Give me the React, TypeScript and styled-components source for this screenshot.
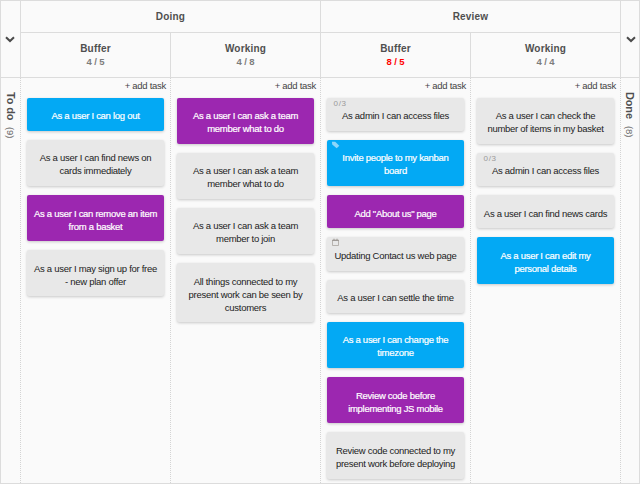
import React from "react";
import styled, { createGlobalStyle, css } from "styled-components";

const GlobalStyle = createGlobalStyle`
  * { box-sizing: border-box; }
  body { margin: 0; background: #fafafa; font-family: "Liberation Sans", Arial, sans-serif; }
`;

const line = "#dcdcdc";

const Board = styled.main`
  display: flex;
  width: 640px;
  height: 484px;
  border: 1px solid ${line};
  background: #fafafa;
  color: #4f4f4f;
  overflow: hidden;
`;

const SideLane = styled.aside`
  display: flex;
  flex-direction: column;
  flex: none;
  width: 19px;
`;

const SideHead = styled.button`
  display: flex;
  justify-content: center;
  flex: none;
  height: 77px;
  padding: 35px 1px 0 0;
  border: 0;
  border-bottom: 1px solid ${line};
  background: transparent;
  color: #4a4a4a;
`;

const SideLabel = styled.div`
  display: flex;
  align-items: center;
  gap: 7px;
  width: 100%;
  padding-top: 14px;
  writing-mode: vertical-rl;
  font-size: 11px;
  line-height: 18px;
  letter-spacing: -0.15px;
  font-weight: bold;
`;

const SideCount = styled.span`
  padding-right: 2px;
  font-size: 9.5px;
  line-height: 16px;
  letter-spacing: -0.1px;
  font-weight: normal;
  color: #6c6c6c;
`;

const Stage = styled.section`
  display: flex;
  flex-direction: column;
  width: 300px;
  flex: none;
`;

const StageTitle = styled.h2`
  flex: none;
  height: 32px;
  margin: 0;
  border: solid ${line};
  border-width: 0 0 1px 1px;
  font-size: 10px;
  line-height: 32px;
  letter-spacing: 0.2px;
  text-align: center;
`;

const Columns = styled.div`
  display: flex;
  flex: 1;
`;

const Column = styled.div`
  display: flex;
  flex-direction: column;
  width: 150px;
`;

const ColumnHead = styled.header`
  flex: none;
  height: 45px;
  padding-top: 9px;
  border: solid ${line};
  border-width: 0 0 1px 1px;
  text-align: center;
`;

const ColumnTitle = styled.h3`
  margin: 0;
  font-size: 10px;
  line-height: 14px;
  letter-spacing: 0.2px;
`;

const Limit = styled.div<{ $over?: boolean }>`
  font-size: 9.5px;
  line-height: 12px;
  letter-spacing: -0.1px;
  font-weight: bold;
  color: ${(p) => (p.$over ? "#f00" : "#7d7d7d")};
`;

const dotted = css`
  background-image: linear-gradient(to bottom, #d4d4d4 50%, transparent 50%);
  background-size: 1px 2px;
  background-repeat: repeat-y;
`;

const ColumnBody = styled.div`
  ${dotted}
  display: flex;
  flex: 1;
  flex-direction: column;
  gap: 9px;
  padding: 1px 6px 0 7px;
`;

const EndBody = styled.div`
  ${dotted}
  flex: 1;
  padding-left: 1px;
`;

const AddTask = styled.button`
  display: flex;
  align-self: flex-end;
  height: 18.6px;
  margin: 0 -2px -9px 0;
  padding: 0;
  border: 0;
  background: transparent;
  color: #444;
  font: 9.5px/13px "Liberation Sans", Arial, sans-serif;
  letter-spacing: -0.28px;
`;

type Tone = "plain" | "blue" | "purple";
const fills: Record<Tone, string> = { plain: "#e8e8e8", blue: "#03a9f4", purple: "#9c27b0" };

const Card = styled.article<{ $tone: Tone }>`
  position: relative;
  flex: none;
  min-height: 33.3px;
  padding: 11.45px 4px 8.75px;
  border-radius: 2px;
  background: ${(p) => fills[p.$tone]};
  box-shadow: 0 1px 3px rgba(0, 0, 0, 0.2);
  color: ${(p) => (p.$tone === "plain" ? "#222" : "#fff")};
  font-size: 9.5px;
  line-height: 13px;
  letter-spacing: -0.28px;
  text-align: center;
  white-space: pre;
  -webkit-text-stroke: ${(p) => (p.$tone === "plain" ? "0" : "0.2px #fff")};
`;

const Badge = styled.span`
  position: absolute;
  top: 1px;
  left: 6.5px;
  font-size: 8px;
  line-height: 9px;
  letter-spacing: 0.7px;
  color: #999;
`;

const Mark = styled.svg`
  position: absolute;
  top: 1px;
  left: 5px;
`;

const Chevron = () => (
  <svg width="10" height="7" viewBox="0 0 10 7" fill="none" stroke="currentColor" strokeWidth="2">
    <path d="M1 1.2 5 5 9 1.2" />
  </svg>
);

const TagMark = () => (
  <Mark width="8" height="8" viewBox="0 0 8 8">
    <path d="M0 .8h3.2L7.3 4.7 4.7 7.3.2 3.6Z" fill="#8dd7fa" />
  </Mark>
);

const DateMark = () => (
  <Mark width="8" height="8" viewBox="0 0 8 8" fill="none">
    <path d="M.5 2h6v5.5h-6Z" stroke="#aaa49f" strokeWidth="0.8" />
    <path d="M.2 2.5h6.6M2 .7v2M5 .7v2" stroke="#9f9a96" />
  </Mark>
);

interface Task {
  text: string;
  tone?: Tone;
  mark?: "tag" | "date" | "steps";
}
interface Lane {
  name: string;
  limit: string;
  over?: boolean;
  tasks: Task[];
}

const stages: { name: string; lanes: Lane[] }[] = [
  {
    name: "Doing",
    lanes: [
      {
        name: "Buffer",
        limit: "4 / 5",
        tasks: [
          { text: "As a user I can log out", tone: "blue" },
          { text: "As a user I can find news on\ncards immediately" },
          { text: "As a user I can remove an item\nfrom a basket", tone: "purple" },
          { text: "As a user I may sign up for free\n- new plan offer" },
        ],
      },
      {
        name: "Working",
        limit: "4 / 8",
        tasks: [
          { text: "As a user I can ask a team\nmember what to do", tone: "purple" },
          { text: "As a user I can ask a team\nmember what to do" },
          { text: "As a user I can ask a team\nmember to join" },
          { text: "All things connected to my\npresent work can be seen by\ncustomers" },
        ],
      },
    ],
  },
  {
    name: "Review",
    lanes: [
      {
        name: "Buffer",
        limit: "8 / 5",
        over: true,
        tasks: [
          { text: "As admin I can access files", mark: "steps" },
          { text: "Invite people to my kanban\nboard", tone: "blue", mark: "tag" },
          { text: 'Add "About us" page', tone: "purple" },
          { text: "Updating Contact us web page", mark: "date" },
          { text: "As a user I can settle the time" },
          { text: "As a user I can change the\ntimezone", tone: "blue" },
          { text: "Review code before\nimplementing JS mobile", tone: "purple" },
          { text: "Review code connected to my\npresent work before deploying" },
        ],
      },
      {
        name: "Working",
        limit: "4 / 4",
        tasks: [
          { text: "As a user I can check the\nnumber of items in my basket" },
          { text: "As admin I can access files", mark: "steps" },
          { text: "As a user I can find news cards" },
          { text: "As a user I can edit my\npersonal details", tone: "blue" },
        ],
      },
    ],
  },
];

const EndLane = styled(SideLane)`
  ${SideHead} {
    padding: 35px 0 0 1px;
    border-left: 1px solid ${line};
  }
`;

export default function App() {
  return (
    <>
      <GlobalStyle />
      <Board>
        <SideLane>
          <SideHead aria-label="Expand To do"><Chevron /></SideHead>
          <SideLabel>To do <SideCount>(9)</SideCount></SideLabel>
        </SideLane>
        {stages.map((stage) => (
          <Stage key={stage.name}>
            <StageTitle>{stage.name}</StageTitle>
            <Columns>
              {stage.lanes.map((lane) => (
                <Column key={lane.name}>
                  <ColumnHead>
                    <ColumnTitle>{lane.name}</ColumnTitle>
                    <Limit $over={lane.over}>{lane.limit}</Limit>
                  </ColumnHead>
                  <ColumnBody>
                    <AddTask>+ add task</AddTask>
                    {lane.tasks.map((task, i) => (
                      <Card key={i} $tone={task.tone ?? "plain"}>
                        {task.mark === "steps" && <Badge>0/3</Badge>}
                        {task.mark === "tag" && <TagMark />}
                        {task.mark === "date" && <DateMark />}
                        {task.text}
                      </Card>
                    ))}
                  </ColumnBody>
                </Column>
              ))}
            </Columns>
          </Stage>
        ))}
        <EndLane>
          <SideHead aria-label="Expand Done"><Chevron /></SideHead>
          <EndBody><SideLabel>Done <SideCount>(8)</SideCount></SideLabel></EndBody>
        </EndLane>
      </Board>
    </>
  );
}
